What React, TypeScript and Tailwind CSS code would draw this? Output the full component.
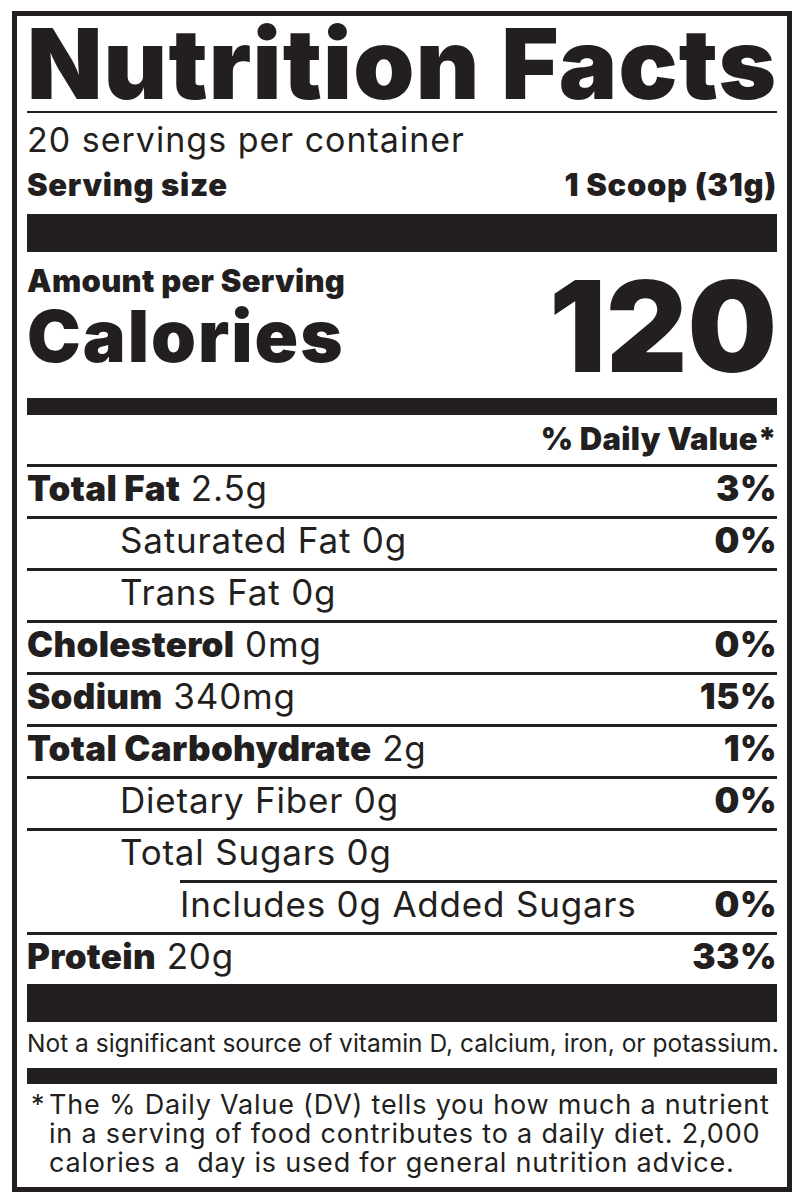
import React from "react";

const F = { fontFamily: "Inter, 'Open Sans', sans-serif" };

type Row = {
  label: string;
  amount: string;
  dv?: string;
  bold?: boolean;
  indent?: number;
  lineIndent?: boolean;
};

const rows: Row[] = [
  { label: "Total Fat", amount: "2.5g", dv: "3%", bold: true },
  { label: "Saturated Fat 0g", amount: "", dv: "0%", indent: 1 },
  { label: "Trans Fat 0g", amount: "", indent: 1 },
  { label: "Cholesterol", amount: "0mg", dv: "0%", bold: true },
  { label: "Sodium", amount: "340mg", dv: "15%", bold: true },
  { label: "Total Carbohydrate", amount: "2g", dv: "1%", bold: true },
  { label: "Dietary Fiber 0g", amount: "", dv: "0%", indent: 1 },
  { label: "Total Sugars 0g", amount: "", indent: 1 },
  { label: "Includes 0g Added Sugars", amount: "", dv: "0%", indent: 2, lineIndent: true },
  { label: "Protein", amount: "20g", dv: "33%", bold: true },
];

export default function App() {
  return (
    <div className="w-[804px] h-[1202px] bg-white pt-[11px] pl-[12px] text-[#231f20]" style={F}>
      <div className="w-[780px] h-[1181px] border-[5px] border-[#231f20] px-[10px] flex flex-col">
        <div className="h-[95px] flex items-end">
          <h1 className="text-[98px] leading-[80px] font-black whitespace-nowrap tracking-[1.2px] pb-[7px]">
            Nutrition Facts
          </h1>
        </div>
        <div className="h-[2px] bg-[#231f20]" />
        <div className="h-[47px] flex items-end text-[34px] leading-[40px] tracking-[1px] whitespace-nowrap">
          20 servings per container
        </div>
        <div className="h-[54px] flex justify-between items-start pt-[6px] text-[31px] leading-[38px] font-black tracking-[0.7px] whitespace-nowrap">
          <span>Serving size</span>
          <span>1 Scoop (31g)</span>
        </div>
        <div className="h-[38px] bg-[#231f20]" />
        <div className="h-[146px] flex justify-between">
          <div className="flex flex-col pt-[12px]">
            <span className="text-[31px] leading-[34px] font-black tracking-[0.3px] whitespace-nowrap">Amount per Serving</span>
            <span className="text-[72px] leading-[76px] font-black whitespace-nowrap tracking-[2px]">Calories</span>
          </div>
          <span className="text-[126px] leading-[140px] font-black whitespace-nowrap pt-[4px]">120</span>
        </div>
        <div className="h-[17px] bg-[#231f20]" />
        <div className="h-[49px] flex justify-end items-center text-[31px] font-black tracking-[0.3px] whitespace-nowrap">
          % Daily Value*
        </div>
        {rows.map((r, i) => (
          <div key={i} className="flex flex-col">
            <div className={r.lineIndent ? "h-[3px] ml-[153px] bg-[#231f20]" : "h-[3px] bg-[#231f20]"} />
            <div className="h-[49px] flex justify-between items-center pb-[7px] text-[35px] leading-[40px] tracking-[0.8px] whitespace-nowrap">
              <span
                className={
                  r.indent === 2 ? "pl-[153px]" : r.indent === 1 ? "pl-[93px]" : ""
                }
              >
                {r.bold ? (
                  <>
                    <span className="font-black tracking-[0.3px]">{r.label}</span> {r.amount}
                  </>
                ) : (
                  r.label
                )}
              </span>
              <span className="font-black tracking-[0.5px]">{r.dv ?? ""}</span>
            </div>
          </div>
        ))}
        <div className="h-[38px] bg-[#231f20]" />
        <div className="h-[46px] flex items-center pb-[4px] text-[24.5px] whitespace-nowrap">
          Not a significant source of vitamin D, calcium, iron, or potassium.
        </div>
        <div className="h-[16px] bg-[#231f20]" />
        <div className="flex pt-[6px] text-[27px] leading-[29px] tracking-[0.8px] whitespace-nowrap">
          <span className="w-[22px] shrink-0 pl-[4px]">*</span>
          <span>
            The % Daily Value (DV) tells you how much a nutrient
            <br />
            in a serving of food contributes to a daily diet. 2,000
            <br />
            calories a&nbsp; day is used for general nutrition advice.
          </span>
        </div>
      </div>
    </div>
  );
}
